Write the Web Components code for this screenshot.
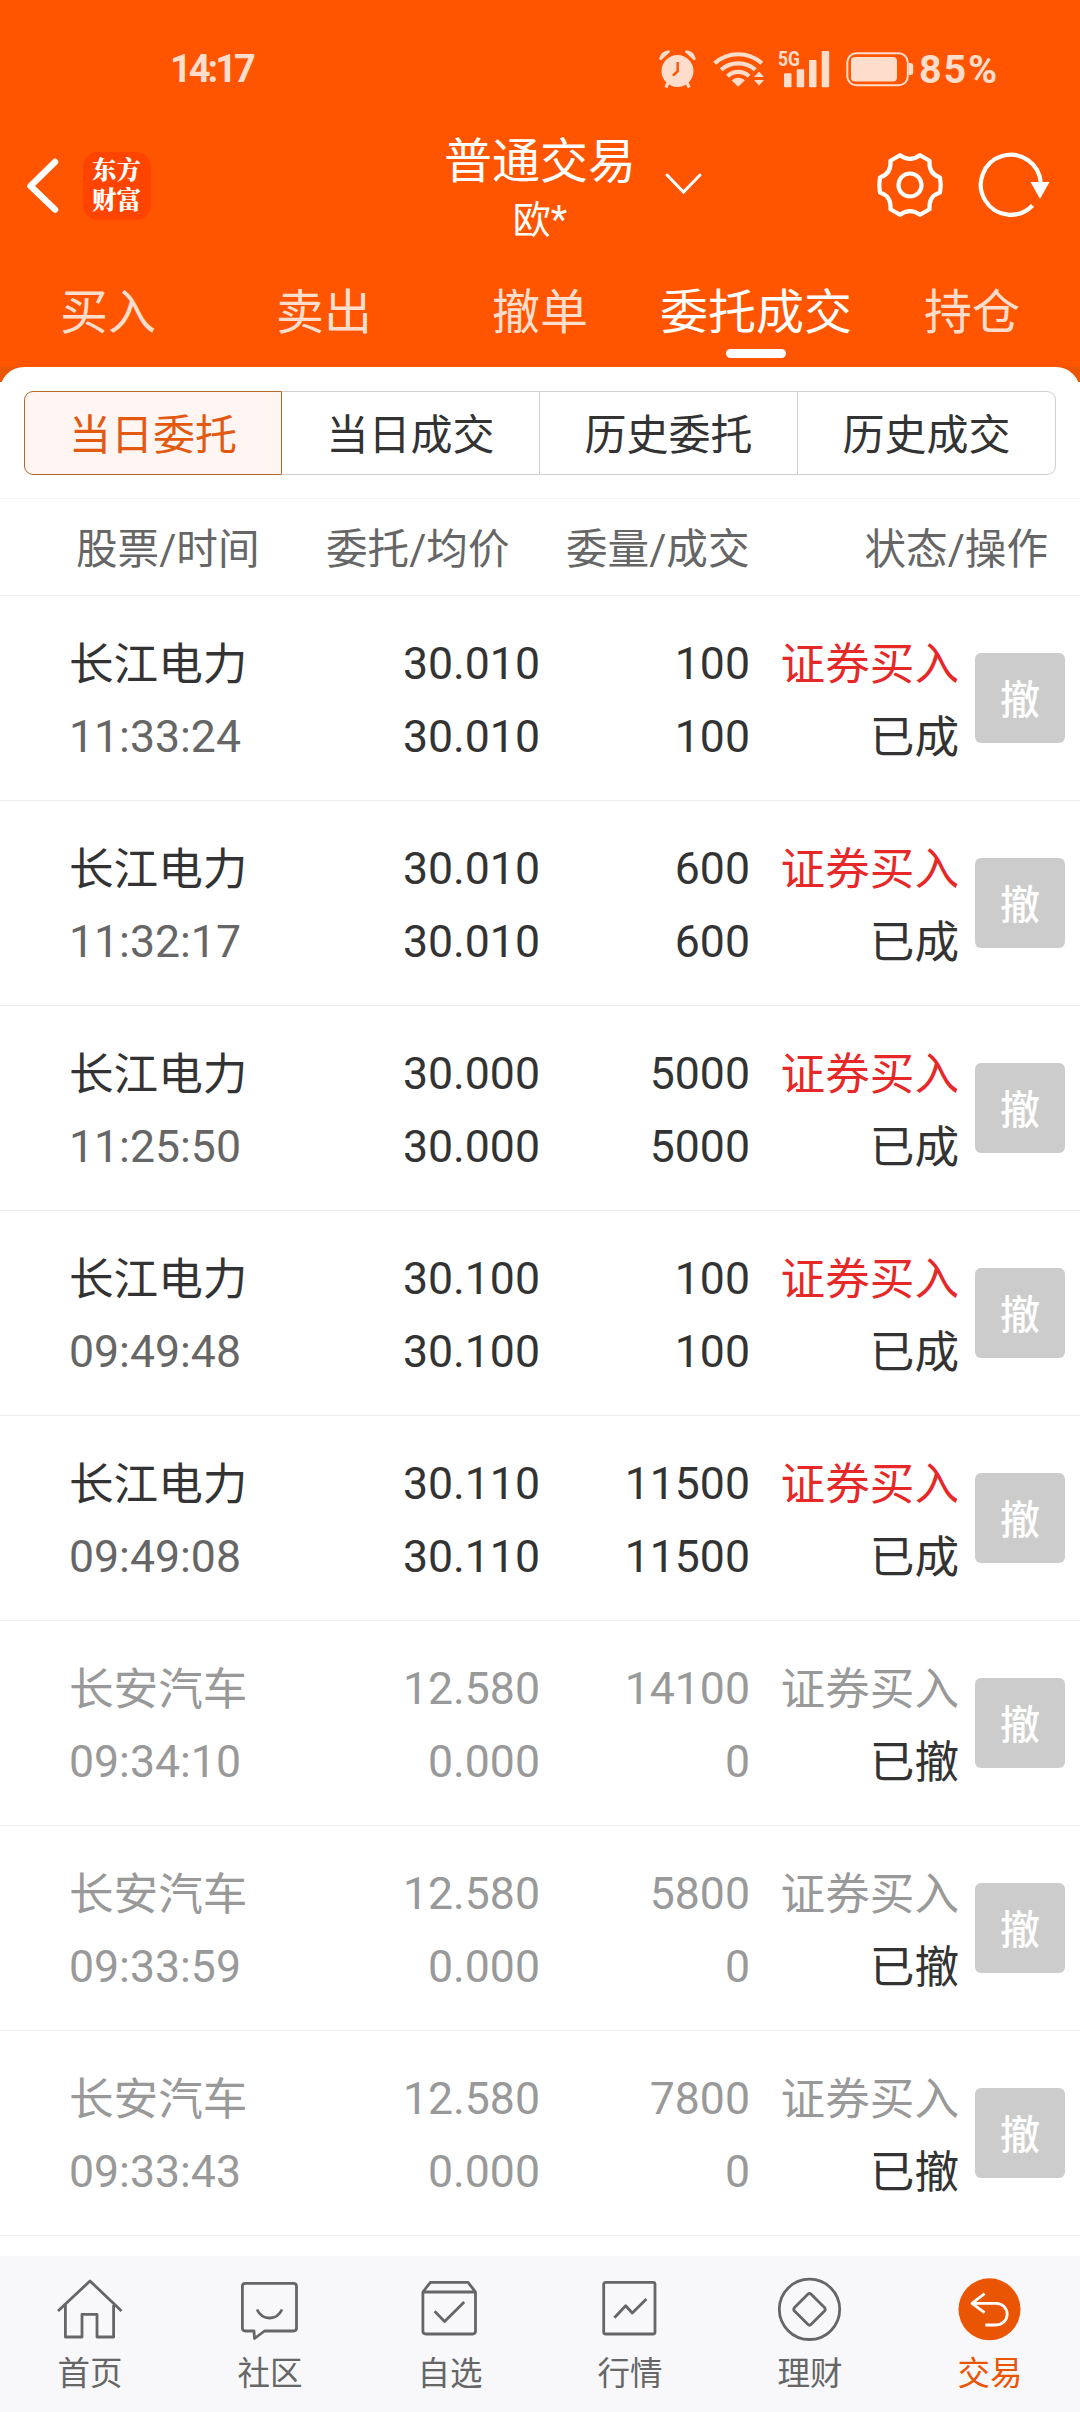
<!DOCTYPE html>
<html lang="zh-CN">
<head>
<meta charset="utf-8">
<title>普通交易</title>
<style>
  body {
    margin: 0;
    width: 1080px;
    height: 2412px;
    overflow: hidden;
    background: #fff;
    color: #333;
    font-family: Roboto, "Noto Sans CJK SC", sans-serif;
    --brand: #ff5500;
    --accent: #ea5504;
    --soft: #ffddcc;
    --line: #eee;
  }
</style>
</head>
<body>
<trade-page>
  <header-bar slot="header" account="欧*">普通交易</header-bar>
  <main-tabs slot="header">
    <main-tab>买入</main-tab>
    <main-tab>卖出</main-tab>
    <main-tab>撤单</main-tab>
    <main-tab active>委托成交</main-tab>
    <main-tab>持仓</main-tab>
  </main-tabs>
  <segment-bar>
    <segment-item active>当日委托</segment-item>
    <segment-item>当日成交</segment-item>
    <segment-item>历史委托</segment-item>
    <segment-item>历史成交</segment-item>
  </segment-bar>
  <order-list></order-list>
  <bottom-nav slot="footer">
    <nav-item icon="home">首页</nav-item>
    <nav-item icon="chat">社区</nav-item>
    <nav-item icon="box">自选</nav-item>
    <nav-item icon="chart">行情</nav-item>
    <nav-item icon="coin">理财</nav-item>
    <nav-item icon="trade" active>交易</nav-item>
  </bottom-nav>
</trade-page>

<script>
// Attach an open shadow root to el and fill it with the given markup
function render (el, html) {
  const root = el.shadowRoot || el.attachShadow({ mode: 'open' });
  root.innerHTML = html;
}

/* Phone status bar: clock, alarm, wifi, signal, battery */
class StatusBar extends HTMLElement {
  constructor () {
    super();
    render(this, `
    <style>
      :host {
        display: flex;
        align-items: center;
        height: 138px;
        padding: 0 76px 0 170px;
        box-sizing: border-box;
        color: var(--soft);
        font-size: 38px;
        font-weight: 700;
        line-height: 40px;
      }
      .time { flex: 1; letter-spacing: -3px; }
      svg { display: block; fill: currentColor; }
      .wifi { margin: 0 14px 0 16px; }
      .battery { margin: 0 5px 0 16px; }
      .level { width: 85px; margin-top: 1px; letter-spacing: 1.8px; font-size: 39.500px; }
      .arc { fill: none; stroke: currentColor; stroke-width: 4.2; }
    </style>
    <span class="time">14:17</span>
    <svg class="alarm" width="38" height="40" viewBox="0 0 38 40">
      <circle cx="18.5" cy="22" r="16"/>
      <path d="M0.3 10.5C0.6 5 5.500 0.800 10.800 1.700L10.800 3.200L2 11.200ZM36.700 10.500C36.400 5 31.500 0.800 26.200 1.700L26.200 3.200L35 11.200Z"/>
      <path d="M9 34L6.800 38.500M28 34L30.200 38.500" stroke="currentColor" stroke-width="3.200"/>
      <path d="M18.700 13V22.200L14 26.500" fill="none" stroke="#ff5500" stroke-width="2.400"/>
    </svg>
    <svg class="wifi" width="51" height="40" viewBox="0 0 51 40">
      <path class="arc" d="M1.700 14.300C14.500 2.200 36 2.200 48.800 14.300"/>
      <path class="arc" d="M8.200 20.800C17.500 12.300 33 12.300 42.300 20.800"/>
      <path class="arc" d="M14.500 27.200C20.500 21.500 30 21.500 36 27.200"/>
      <path d="M18.700 31.500C22 27.800 28.500 27.800 31.800 31.500L25.200 37.800Z"/>
      <path d="M46 22.500L51 28H41ZM41 31H51L46 36.500Z"/>
    </svg>
    <svg class="signal" width="52" height="50" viewBox="0 -5 52 50">
      <text x="0" y="17" font-size="21" font-weight="700" textLength="22" lengthAdjust="spacingAndGlyphs">5G</text>
      <rect x="6" y="24.300" width="7.500" height="14" rx="1"/>
      <rect x="18.700" y="20.300" width="7.500" height="18" rx="1"/>
      <rect x="31" y="11" width="7.500" height="27.300" rx="1"/>
      <rect x="43.700" y="2" width="7.500" height="36.300" rx="1"/>
    </svg>
    <svg class="battery" width="68" height="36" viewBox="0 0 68 36">
      <rect x="1.300" y="2.300" width="60.500" height="32" rx="9" fill="none" stroke="currentColor" stroke-width="2"/>
      <rect x="5" y="6" width="46" height="24.500" rx="4"/>
      <path d="M63 12H65Q67.200 12 67.200 14.500V21.500Q67.200 24 65 24H63Z"/>
    </svg>
    <span class="level">85%</span>
    `);
  }
}
customElements.define('status-bar', StatusBar);

/* Title row: back arrow, logo, account switcher, settings, refresh */
class HeaderBar extends HTMLElement {
  constructor () {
    super();
    render(this, `
    <style>
      :host {
        display: grid;
        grid-template-columns: 1fr auto 1fr;
        height: 128px;
        box-sizing: border-box;
        color: #fff;
      }
      .left, .right {
        display: flex;
        align-items: flex-start;
        padding-top: 14px;
      }
      .left { padding-left: 24px; }
      .right { padding-left: 28px; }
      svg {
        display: block;
        fill: none;
        stroke: currentColor;
      }
      .logo {
        width: 68px;
        height: 68px;
        margin-left: 21px;
        padding: 4px 0 0 9px;
        box-sizing: border-box;
        border-radius: 15px;
        background: #ff4400;
        font: 900 24.500px/30px Roboto, "Noto Serif CJK SC", "Noto Sans CJK SC", sans-serif;
      }
      .title {
        margin-top: -9px;
        text-align: center;
        font-size: 48px;
        line-height: 66px;
      }
      .account {
        text-align: center;
        font-size: 38px;
        line-height: 50px;
      }
      .down { margin: 20px 172px 0 0; }
      .gear { margin-right: 31px; }
    </style>
    <div class="left">
      <svg width="38" height="68" viewBox="0 0 38 68" stroke-width="6.500" stroke-linecap="round" stroke-linejoin="round">
        <path d="M31 10L6.500 34L31 57.500"/>
      </svg>
      <div class="logo">东方<br>财富</div>
    </div>
    <div>
      <div class="title"><slot></slot></div>
      <div class="account">${this.getAttribute('account')}</div>
    </div>
    <div class="right">
      <svg class="down" width="40" height="24" viewBox="0 0 40 24" stroke-width="3" stroke-linecap="round">
        <path d="M3 3L19.500 20L36 3"/>
      </svg>
      <svg class="gear" width="68" height="68" viewBox="0 0 68 68" stroke-width="4.200" stroke-linejoin="round">
        <circle cx="34" cy="33" r="11.500"/>
        <path d="M24 3.200Q34 10.400 44 3.200L53.500 8.700Q52.500 22 64 25.500Q65.500 33 64 40.500Q52.500 44 53.500 57.300L44 62.800Q34 55.600 24 62.800L14.500 57.300Q15.500 44 4 40.500Q2.500 33 4 25.500Q15.500 22 14.500 8.700Z"/>
      </svg>
      <svg width="76" height="68" viewBox="0 0 76 68" stroke-width="4.200">
        <path d="M65.800 31.500A30 30 0 1 0 57.500 53.500"/>
        <path d="M55.500 30H74.500L65 47Z" fill="currentColor" stroke="none"/>
      </svg>
    </div>
    `);
  }
}
customElements.define('header-bar', HeaderBar);

class MainTabs extends HTMLElement {
  constructor () {
    super();
    render(this, `
    <style>
      :host {
        display: grid;
        grid-template-columns: repeat(5, 1fr);
        height: 101px;
      }
    </style>
    <slot></slot>
    `);
  }
}
customElements.define('main-tabs', MainTabs);

class MainTab extends HTMLElement {
  constructor () {
    super();
    render(this, `
    <style>
      :host {
        display: flex;
        flex-direction: column;
        align-items: center;
        padding-top: 14px;
        color: var(--soft);
        font-size: 48px;
        line-height: 66px;
        white-space: nowrap;
      }
      :host([active]) { color: #fff; }
      :host([active])::after {
        content: "";
        width: 60px;
        height: 9px;
        margin-top: 3px;
        border-radius: 5px;
        background: #fff;
      }
    </style>
    <slot></slot>
    `);
  }
}
customElements.define('main-tab', MainTab);

class SegmentBar extends HTMLElement {
  constructor () {
    super();
    render(this, `
    <style>
      :host {
        display: grid;
        grid-template-columns: repeat(4, 1fr);
        padding: 24px 24px 23px;
        border-bottom: 1px solid #f6f6f6;
      }
    </style>
    <slot></slot>
    `);
  }
}
customElements.define('segment-bar', SegmentBar);

class SegmentItem extends HTMLElement {
  constructor () {
    super();
    render(this, `
    <style>
      :host {
        height: 84px;
        box-sizing: border-box;
        border: 1px solid #d0d0d0;
        border-left-width: 0;
        text-align: center;
        font-size: 42px;
        line-height: 88px;
      }
      :host(:first-of-type) { border-radius: 9px 0 0 9px; }
      :host(:last-of-type) { border-radius: 0 9px 9px 0; }
      :host([active]) {
        border: 1px solid #b5682f;
        background: #fff6f3;
        color: #e2590f;
      }
    </style>
    <slot></slot>
    `);
  }
}
customElements.define('segment-item', SegmentItem);

/**
 * One order of the list. Set .data with
 * { name, time, price, avg, amount, filled, side, state }
 */
class OrderRow extends HTMLElement {
  set data (data) {
    if (!data) return;
    const off = data.state === '已撤' ? 'off' : '';
    render(this, `
    <style>
      :host {
        display: grid;
        grid-template-columns: 231px 240px 210px 209px 90px;
        height: 205px;
        padding: 32px 0 0 69px;
        box-sizing: border-box;
        border-bottom: 1px solid var(--line);
        font-size: 44.600px;
        line-height: 73px;
        text-align: right;
        white-space: nowrap;
      }
      .first { text-align: left; }
      .time { color: #666; }
      .name, .status { padding-top: 1px; }
      .name { margin-bottom: -1px; }
      .side { color: #e62828; }
      .off, .off .time { color: #999; }
      button {
        width: 90px;
        height: 90px;
        margin: 25px 0 0 16px;
        padding: 0;
        border: 0;
        border-radius: 6px;
        background: #ccc;
        color: #fff;
        font: 500 40px/95px Roboto, "Noto Sans CJK SC", sans-serif;
      }
    </style>
    <div class="first ${off}">
      <div class="name">${data.name}</div>
      <div class="time">${data.time}</div>
    </div>
    <div class="${off}">
      <div>${data.price}</div>
      <div>${data.avg}</div>
    </div>
    <div class="${off}">
      <div>${data.amount}</div>
      <div>${data.filled}</div>
    </div>
    <div class="status">
      <div class="${off || 'side'}">${data.side}</div>
      <div>${data.state}</div>
    </div>
    <button>撤</button>
    `);
  }
}
customElements.define('order-row', OrderRow);

const orders = [
  ['长江电力', '11:33:24', '30.010', '30.010', '100', '100', '已成'],
  ['长江电力', '11:32:17', '30.010', '30.010', '600', '600', '已成'],
  ['长江电力', '11:25:50', '30.000', '30.000', '5000', '5000', '已成'],
  ['长江电力', '09:49:48', '30.100', '30.100', '100', '100', '已成'],
  ['长江电力', '09:49:08', '30.110', '30.110', '11500', '11500', '已成'],
  ['长安汽车', '09:34:10', '12.580', '0.000', '14100', '0', '已撤'],
  ['长安汽车', '09:33:59', '12.580', '0.000', '5800', '0', '已撤'],
  ['长安汽车', '09:33:43', '12.580', '0.000', '7800', '0', '已撤']
];

class OrderList extends HTMLElement {
  constructor () {
    super();
    render(this, `
    <style>
      :host { display: block; }
      .head {
        display: grid;
        grid-template-columns: 250px 240px 1fr auto;
        height: 97px;
        padding: 0 32px 0 76px;
        box-sizing: border-box;
        border-bottom: 1px solid var(--line);
        color: #666;
        font-size: 41.600px;
        line-height: 102px;
      }
    </style>
    <div class="head">
      <span>股票/时间</span>
      <span>委托/均价</span>
      <span>委量/成交</span>
      <span>状态/操作</span>
    </div>
    `);
    orders.forEach(([name, time, price, avg, amount, filled, state]) => {
      const row = document.createElement('order-row');
      row.data = { name, time, price, avg, amount, filled, state, side: '证券买入' };
      this.shadowRoot.append(row);
    });
  }
}
customElements.define('order-list', OrderList);

class BottomNav extends HTMLElement {
  constructor () {
    super();
    render(this, `
    <style>
      :host {
        display: grid;
        grid-template-columns: repeat(6, 1fr);
        height: 156px;
        background: #f8f8fb;
      }
    </style>
    <slot></slot>
    `);
  }
}
customElements.define('bottom-nav', BottomNav);

const icons = {
  home: '<path d="M8 37L40 7L71.500 37M15.400 31V63H32V40.300H47V63H63.600V31"/>',
  chat: '<path d="M24 57H15.400Q12.400 57 12.400 54V12.300Q12.400 9.300 15.400 9.300H63.500Q66.500 9.300 66.500 12.300V54Q66.500 57 63.500 57H34.500L24.500 64.500Z"/><path d="M27 35.500Q31 44 39.600 44Q48 44 52 35.500"/>',
  box: '<path d="M12.900 18L20.400 8.300H58L65.500 18V57Q65.500 60 62.500 60H15.900Q12.900 60 12.900 57ZM12.900 18H65.500M24.600 37.300L34.600 47.500L54.200 28"/>',
  chart: '<rect x="13.700" y="8.300" width="51.300" height="51.700" rx="2"/><path d="M24.400 43.700L35.700 31.700L42.300 39L56.400 25"/>',
  coin: '<circle cx="39.500" cy="35.300" r="30.200"/><path d="M37.800 20.300Q39.500 18.600 41.200 20.300L54.500 33.600Q56 35.300 54.500 37L41.200 50.300Q39.500 52 37.800 50.300L24.500 37Q23 35.300 24.500 33.600Z"/>',
  trade: '<circle cx="39.500" cy="35.300" r="31" fill="#ea5504" stroke="none"/><path stroke="#fff" d="M34.600 19.700L22 29.300L34.600 38.700M22 29.300H46.300A10.850 10.850 0 0 1 46.300 51H35.300"/>'
};

class NavItem extends HTMLElement {
  constructor () {
    super();
    render(this, `
    <style>
      :host {
        display: flex;
        flex-direction: column;
        align-items: center;
        padding-top: 18px;
        color: #666;
        font-size: 32.500px;
        line-height: 40px;
      }
      :host([active]) { color: var(--accent); }
      svg {
        display: block;
        margin-bottom: 8px;
        fill: none;
        stroke: currentColor;
        stroke-width: 2.800;
        stroke-linejoin: round;
      }
    </style>
    <svg width="80" height="72" viewBox="0 0 80 72">${icons[this.getAttribute('icon')]}</svg>
    <slot></slot>
    `);
  }
}
customElements.define('nav-item', NavItem);

/* Page frame: orange header, rounded white panel, footer */
class TradePage extends HTMLElement {
  constructor () {
    super();
    render(this, `
    <style>
      :host {
        display: flex;
        flex-direction: column;
        height: 2412px;
      }
      header { height: 367px; background: var(--brand); }
      .corners { background: linear-gradient(var(--accent) 15px, #fff 15px); }
      main { flex: 1; }
      .panel {
        border-radius: 24px 24px 0 0;
        background: #fff;
      }
    </style>
    <header>
      <status-bar></status-bar>
      <slot name="header"></slot>
    </header>
    <main>
      <div class="corners"><div class="panel"><slot></slot></div></div>
    </main>
    <slot name="footer"></slot>
    `);
  }
}
customElements.define('trade-page', TradePage);
</script>
</body>
</html>
